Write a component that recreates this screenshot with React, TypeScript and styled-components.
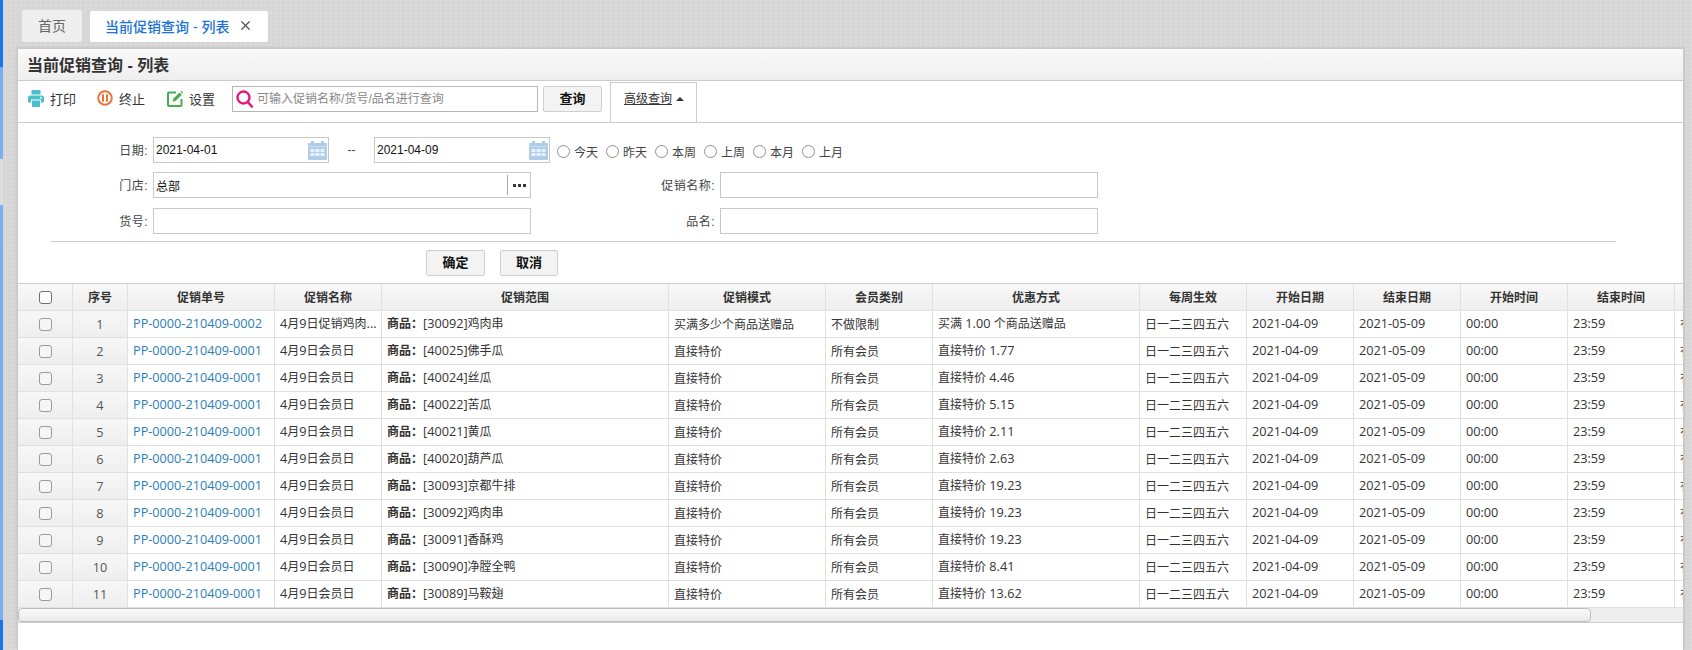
import React from "react";
import styled, { createGlobalStyle, css } from "styled-components";
import { X } from "lucide-react";

const Global = createGlobalStyle`
  html, body { margin: 0; padding: 0; height: 100%; overflow: hidden; }
  body { font-family: "Liberation Sans", "Noto Sans CJK SC", sans-serif; font-size: 12px; color: #333; }
  * { box-sizing: border-box; }
`;

const Page = styled.div`
  width: 1692px;
  height: 650px;
  display: flex;
  overflow: hidden;
  background-color: #dadada;
  background-image:
    repeating-linear-gradient(0deg, rgba(255,255,255,.05) 0 1px, rgba(0,0,0,.006) 1px 3px, rgba(0,0,0,.015) 3px 4px),
    repeating-linear-gradient(90deg, rgba(255,255,255,.04) 0 1px, rgba(0,0,0,.005) 1px 2px, rgba(0,0,0,.015) 2px 5px);
`;

const LeftStrip = styled.div`
  flex: 0 0 3px;
  background: linear-gradient(180deg,
    #1a73e8 0 67px, #79aef2 67px 159px, #dcdcdc 159px 205px,
    #79aef2 205px 620px, #1a73e8 620px 650px);
`;

const Main = styled.div`
  flex: 1;
  display: flex;
  flex-direction: column;
  padding-top: 10px;
  min-width: 0;
`;

const TabBar = styled.div`
  display: flex;
  align-items: flex-end;
  gap: 8px;
  height: 32px;
  margin-left: 19px;
`;

const HomeTab = styled.div`
  width: 60px;
  height: 32px;
  padding-bottom: 2px;
  background: #eeeeee;
  border-radius: 3px;
  color: #666;
  font-size: 14px;
  display: flex;
  align-items: center;
  justify-content: center;
`;

const ActiveTab = styled.div`
  width: 178px;
  height: 31px;
  padding: 0 0 2px 15px;
  background: #fff;
  border-radius: 2px;
  color: #1a73d8;
  font-size: 14px;
  font-weight: 500;
  display: flex;
  align-items: center;
  gap: 9px;
  svg { color: #555; flex: none; }
`;

const Panel = styled.div`
  width: 1667px;
  margin-top: 6px;
  margin-left: 14px;
  flex: 1;
  min-height: 0;
  background: #fff;
  border: 1px solid #c8c8c8;
  border-bottom: none;
  overflow: hidden;
  box-shadow: 0 0 3px rgba(0,0,0,.12);
`;

const TitleBar = styled.div`
  height: 32px;
  padding: 0 0 2px 9px;
  display: flex;
  align-items: center;
  font-size: 16px;
  font-weight: 700;
  color: #333;
  background: linear-gradient(180deg, #f9f9f9, #eeeeee);
  border-bottom: 1px solid #cccccc;
`;

const Toolbar = styled.div`
  height: 42px;
  display: flex;
  align-items: flex-start;
  padding-left: 10px;
  border-bottom: 1px solid #cccccc;
`;

const ToolItem = styled.div`
  height: 34px;
  display: flex;
  align-items: center;
  gap: 6px;
  margin-right: 21px;
  font-size: 13px;
  color: #333;
  &:nth-child(2) { margin-right: 22px; }
  &:nth-child(3) { margin-right: 17px; }
`;

const SearchBox = styled.div`
  width: 306px;
  height: 26px;
  margin-top: 5px;
  display: flex;
  align-items: center;
  gap: 4px;
  padding-left: 3px;
  border: 1px solid #b5b5b5;
  background: #fff;
`;

const SearchInput = styled.input`
  flex: 1;
  min-width: 0;
  height: 22px;
  border: none;
  outline: none;
  padding: 0;
  font: inherit;
  font-size: 12px;
  &::placeholder { color: #888; opacity: 1; }
`;

const PlainButton = styled.button<{ $w: number }>`
  width: ${(p) => p.$w}px;
  height: 26px;
  padding: 0 0 3px;
  background: #f3f3f3;
  border: 1px solid #cfcfcf;
  border-radius: 2px;
  font-family: inherit;
  font-size: 13px;
  font-weight: 700;
  color: #111;
`;

const QueryButton = styled(PlainButton)`
  margin-top: 5px;
  margin-left: 5px;
`;

const AdvancedTab = styled.div`
  width: 87px;
  height: 40px;
  margin-top: 1px;
  margin-left: 8px;
  padding: 8px 0 0 13px;
  border: 1px solid #cccccc;
  border-bottom: none;
  display: flex;
  align-items: flex-start;
  gap: 4px;
  font-size: 12px;
  line-height: 16px;
  u { color: #333; }
`;

const Caret = styled.span`
  width: 0;
  height: 0;
  margin-top: 6px;
  border-left: 4px solid transparent;
  border-right: 4px solid transparent;
  border-bottom: 4px solid #333;
`;

const Form = styled.div`
  padding-top: 14px;
`;

const FormRow = styled.div`
  display: flex;
  align-items: center;
  height: 26px;
  & + & { margin-top: 9px; }
  & + & + & { margin-top: 10px; }
`;

const Label = styled.label<{ $w: number }>`
  width: ${(p) => p.$w}px;
  flex: none;
  text-align: right;
  color: #444;
  font-size: 12px;
  letter-spacing: 0.5px;
  padding: 0 5px 2px 0;
`;

const Field = styled.div<{ $w: number }>`
  position: relative;
  width: ${(p) => p.$w}px;
  height: 26px;
  flex: none;
  border: 1px solid #c8c8c8;
  background: #fff;
  display: flex;
`;

const FieldInput = styled.input`
  flex: 1;
  min-width: 0;
  height: 24px;
  border: none;
  outline: none;
  padding: 0 0 0 2px;
  font-family: inherit;
  font-size: 12px;
  color: #111;
  background: transparent;
`;

const CalendarSlot = styled.span`
  position: absolute;
  right: 0;
  top: 2px;
  width: 21px;
  height: 21px;
`;

const Dots = styled.span`
  width: 23px;
  height: 20px;
  margin-top: 2px;
  border-left: 1px solid #aaa;
  display: flex;
  align-items: center;
  justify-content: center;
  gap: 2px;
  i { width: 3px; height: 3px; background: #3a3340; display: block; }
`;

const Dash = styled.span`
  width: 45px;
  text-align: center;
  flex: none;
  color: #444;
`;

const RadioGroup = styled.div`
  display: flex;
  align-items: center;
  margin-left: 7px;
  padding-top: 3px;
`;

const RadioItem = styled.label`
  width: 49px;
  display: flex;
  align-items: center;
  gap: 4px;
  font-size: 12px;
  color: #444;
`;

const Radio = styled.input.attrs({ type: "radio", readOnly: true })`
  appearance: none;
  margin: 0;
  width: 13px;
  height: 13px;
  border: 1px solid #8f8f8f;
  border-radius: 50%;
  background: #fff;
  flex: none;
`;

const Divider = styled.div`
  width: 1566px;
  height: 1px;
  margin: 7px 0 0 32px;
  background: #cccccc;
`;

const FormActions = styled.div`
  display: flex;
  gap: 15px;
  margin: 8px 0 7px 408px;
`;

const TableWrap = styled.div`
  width: 100%;
  overflow: hidden;
  border-top: 1px solid #cfcfcf;
`;

const Table = styled.table`
  width: 1757px;
  table-layout: fixed;
  border-collapse: separate;
  border-spacing: 0;
`;

const cellBase = css`
  padding: 0 0 2px 5px;
  border-right: 1px solid #e0e0e0;
  border-bottom: 1px solid #e0e0e0;
  white-space: nowrap;
  overflow: hidden;
  text-overflow: ellipsis;
`;

const Th = styled.th`
  ${cellBase}
  height: 27px;
  padding: 0 0 2px;
  text-align: center;
  font-size: 12px;
  font-weight: 700;
  color: #333;
  background: linear-gradient(180deg, #f8f8f8, #eeeeee);
`;

const CheckTh = styled(Th)`
  padding: 0;
`;

const Td = styled.td`
  ${cellBase}
  height: 27px;
  font-size: 12px;
  color: #333;
`;

const SideTd = styled(Td)`
  padding: 0;
  text-align: center;
  color: #555;
  background: linear-gradient(180deg, #f7f7f7, #eeeeee);
`;

const Link = styled.span`
  color: #2a7db8;
`;

const Latin = styled.span`
  font-family: "Open Sans", sans-serif;
  font-size: 12.7px;
`;

const Check = styled.input.attrs({ type: "checkbox", readOnly: true })<{ $head?: boolean }>`
  appearance: none;
  display: block;
  margin: 0 auto;
  width: 13px;
  height: 13px;
  border-radius: 3px;
  border: 1px solid ${(p) => (p.$head ? "#6f6f6f" : "#9a9a9a")};
  background: ${(p) => (p.$head ? "#ffffff" : "#f6f6f6")};
`;

const ScrollTrack = styled.div`
  height: 15px;
  background: #eeeeee;
  border-bottom: 1px solid #cccccc;
`;

const ScrollThumb = styled.div`
  width: 1573px;
  height: 14px;
  border: 1px solid #bdbdbd;
  border-radius: 4px;
  background: linear-gradient(180deg, #fbfbfb, #e9e9e9);
`;

const Mixed = ({ text }: { text: string }) => (
  <>
    {text.split(/([\x00-\x7f]+)/).filter(Boolean).map((part, i) =>
      /^[\x00-\x7f]+$/.test(part) ? <Latin key={i}>{part}</Latin> : <React.Fragment key={i}>{part}</React.Fragment>
    )}
  </>
);

const PrintIcon = () => (
  <svg width="16" height="17" viewBox="0 0 16 17" fill="#4cbfce">
    <path d="M3.5 0h9v4.5h-9z" />
    <path d="M2 5.5h12a2 2 0 0 1 2 2v5h-3v-3H3v3H0v-5a2 2 0 0 1 2-2z" />
    <path d="M4 10.5h8V17H4z" />
    <circle cx="13" cy="7.7" r="0.9" fill="#fff" />
  </svg>
);

const PauseIcon = () => (
  <svg width="16" height="16" viewBox="0 0 16 16" fill="none">
    <circle cx="8" cy="8" r="6.8" stroke="#e8753c" strokeWidth="2" />
    <path d="M6 5v6M10 5v6" stroke="#e8753c" strokeWidth="2" strokeLinecap="round" />
  </svg>
);

const EditIcon = () => (
  <svg width="16" height="17" viewBox="0 0 16 17" fill="none">
    <path d="M9 2.5H2A1 1 0 0 0 1 3.5v11.5a1 1 0 0 0 1 1h11.5a1 1 0 0 0 1-1V9" stroke="#47ad4f" strokeWidth="2" />
    <path d="M5.5 11.8l1-3.4 6-6 2.3 2.3-6 6z" fill="#47ad4f" />
    <path d="M13.3 1.6l.9-.9 2 2-.9.9z" fill="#47ad4f" />
  </svg>
);

const SearchIcon = () => (
  <svg width="17" height="18" viewBox="0 0 17 18" fill="none" style={{ flex: "none" }}>
    <circle cx="7.5" cy="7.5" r="6" stroke="#e5177f" strokeWidth="2.4" />
    <path d="M11.8 12l4 4.5" stroke="#e5177f" strokeWidth="2.6" strokeLinecap="round" />
  </svg>
);

const CalendarIcon = () => (
  <svg width="21" height="21" viewBox="0 0 21 21">
    <path d="M1 3h19v17H1z" fill="#aecde9" />
    <path d="M4 1h3v3H4zM14 1h3v3h-3z" fill="#aecde9" />
    <path d="M1 6.5h19" stroke="#c9def1" strokeWidth="1" />
    <path
      d="M3.5 9h4v3h-4zM8.5 9h4v3h-4zM13.5 9h4v3h-4zM3.5 13h4v3h-4zM8.5 13h4v3h-4zM13.5 13h4v3h-4z"
      fill="#e9f2fa"
    />
  </svg>
);

const widths = [55, 55, 147, 107, 287, 157, 107, 207, 107, 107, 107, 107, 107, 100];
const heads = ["序号", "促销单号", "促销名称", "促销范围", "促销模式", "会员类别", "优惠方式", "每周生效", "开始日期", "结束日期", "开始时间", "结束时间", ""];

type Row = { code: string; name: string; scope: string; mode: string; member: string; deal: string };
const plain = (code: string, scope: string, price: string): Row => ({
  code, name: "4月9日会员日", scope, mode: "直接特价", member: "所有会员", deal: `直接特价 ${price}`,
});
const rows: Row[] = [
  { code: "PP-0000-210409-0002", name: "4月9日促销鸡肉...", scope: "[30092]鸡肉串", mode: "买满多少个商品送赠品", member: "不做限制", deal: "买满 1.00 个商品送赠品" },
  plain("PP-0000-210409-0001", "[40025]佛手瓜", "1.77"),
  plain("PP-0000-210409-0001", "[40024]丝瓜", "4.46"),
  plain("PP-0000-210409-0001", "[40022]苦瓜", "5.15"),
  plain("PP-0000-210409-0001", "[40021]黄瓜", "2.11"),
  plain("PP-0000-210409-0001", "[40020]葫芦瓜", "2.63"),
  plain("PP-0000-210409-0001", "[30093]京都牛排", "19.23"),
  plain("PP-0000-210409-0001", "[30092]鸡肉串", "19.23"),
  plain("PP-0000-210409-0001", "[30091]香酥鸡", "19.23"),
  plain("PP-0000-210409-0001", "[30090]净膛全鸭", "8.41"),
  plain("PP-0000-210409-0001", "[30089]马鞍翅", "13.62"),
];
const radios = ["今天", "昨天", "本周", "上周", "本月", "上月"];

export default function App() {
  return (
    <Page>
      <Global />
      <LeftStrip />
      <Main>
        <TabBar>
          <HomeTab>首页</HomeTab>
          <ActiveTab>
            当前促销查询 - 列表
            <X size={15} strokeWidth={2} />
          </ActiveTab>
        </TabBar>
        <Panel>
          <TitleBar>当前促销查询 - 列表</TitleBar>
          <Toolbar>
            <ToolItem><PrintIcon />打印</ToolItem>
            <ToolItem><PauseIcon />终止</ToolItem>
            <ToolItem><EditIcon />设置</ToolItem>
            <SearchBox>
              <SearchIcon />
              <SearchInput placeholder="可输入促销名称/货号/品名进行查询" readOnly />
            </SearchBox>
            <QueryButton $w={59}>查询</QueryButton>
            <AdvancedTab><u>高级查询</u><Caret /></AdvancedTab>
          </Toolbar>
          <Form>
            <FormRow>
              <Label $w={135}>日期:</Label>
              <Field $w={176}>
                <FieldInput value="2021-04-01" readOnly />
                <CalendarSlot><CalendarIcon /></CalendarSlot>
              </Field>
              <Dash>--</Dash>
              <Field $w={176}>
                <FieldInput value="2021-04-09" readOnly />
                <CalendarSlot><CalendarIcon /></CalendarSlot>
              </Field>
              <RadioGroup>
                {radios.map((r) => (
                  <RadioItem key={r}><Radio name="range" />{r}</RadioItem>
                ))}
              </RadioGroup>
            </FormRow>
            <FormRow>
              <Label $w={135}>门店:</Label>
              <Field $w={378}>
                <FieldInput value="总部" readOnly />
                <Dots><i /><i /><i /></Dots>
              </Field>
              <Label $w={189}>促销名称:</Label>
              <Field $w={378}><FieldInput readOnly /></Field>
            </FormRow>
            <FormRow>
              <Label $w={135}>货号:</Label>
              <Field $w={378}><FieldInput readOnly /></Field>
              <Label $w={189}>品名:</Label>
              <Field $w={378}><FieldInput readOnly /></Field>
            </FormRow>
          </Form>
          <Divider />
          <FormActions>
            <PlainButton $w={59}>确定</PlainButton>
            <PlainButton $w={58}>取消</PlainButton>
          </FormActions>
          <TableWrap>
            <Table>
              <colgroup>
                {widths.map((w, i) => <col key={i} style={{ width: w }} />)}
              </colgroup>
              <thead>
                <tr>
                  <CheckTh><Check $head /></CheckTh>
                  {heads.map((h, i) => <Th key={i}>{h}</Th>)}
                </tr>
              </thead>
              <tbody>
                {rows.map((r, i) => (
                  <tr key={i}>
                    <SideTd><Check /></SideTd>
                    <SideTd><Latin>{i + 1}</Latin></SideTd>
                    <Td><Link><Latin>{r.code}</Latin></Link></Td>
                    <Td><Mixed text={r.name} /></Td>
                    <Td><b>商品：</b><Mixed text={r.scope} /></Td>
                    <Td><Mixed text={r.mode} /></Td>
                    <Td><Mixed text={r.member} /></Td>
                    <Td><Mixed text={r.deal} /></Td>
                    <Td>日一二三四五六</Td>
                    <Td><Latin>2021-04-09</Latin></Td>
                    <Td><Latin>2021-05-09</Latin></Td>
                    <Td><Latin>00:00</Latin></Td>
                    <Td><Latin>23:59</Latin></Td>
                    <Td>有效</Td>
                  </tr>
                ))}
              </tbody>
            </Table>
          </TableWrap>
          <ScrollTrack><ScrollThumb /></ScrollTrack>
        </Panel>
      </Main>
    </Page>
  );
}
